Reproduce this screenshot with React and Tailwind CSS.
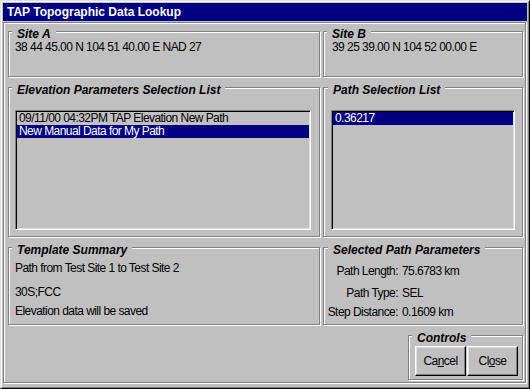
import React from "react";

function Group({ label, className, labelClass, children }) {
  return (
    <div
      className={`relative border border-[#808080] shadow-[inset_1px_1px_0_#ffffff,1px_1px_0_#ffffff] ${className}`}
    >
      <span
        className={`absolute top-[-5px] bg-[#c0c0c0] px-[5px] text-[12px] leading-[14px] font-bold italic tracking-normal whitespace-nowrap ${labelClass}`}
      >
        {label}
      </span>
      {children}
    </div>
  );
}

function ListBox({ className, items, selected }) {
  return (
    <div
      className={`border border-t-[#808080] border-l-[#808080] border-r-white border-b-white shadow-[inset_1px_1px_0_#000000,inset_-1px_-1px_0_#dfdfdf] p-[1px] ${className}`}
    >
      {items.map((it, i) => (
        <div
          key={i}
          className={`h-[13px] leading-[13px] text-[12px] pl-[2px] whitespace-nowrap ${
            i === selected ? "bg-[#000080] text-white" : "text-black"
          }`}
        >
          {it}
        </div>
      ))}
    </div>
  );
}

function Button({ children }) {
  return (
    <div className="w-[51px] h-[30px] border border-t-white border-l-white border-r-black border-b-black shadow-[inset_-1px_-1px_0_#808080,inset_1px_1px_0_#dfdfdf] flex items-center justify-center text-[12px] leading-[14px] text-black">
      {children}
    </div>
  );
}

export default function App() {
  return (
    <div className="w-[530px] h-[389px] bg-[#c0c0c0] font-['Liberation_Sans',Arial,sans-serif] tracking-[-0.55px] text-black">
      <div className="w-full h-full border border-t-[#dfdfdf] border-l-[#dfdfdf] border-r-black border-b-black">
        <div className="w-full h-full border border-t-white border-l-white border-r-[#808080] border-b-[#808080] p-[1px] flex flex-col">
          {/* Title bar */}
          <div className="h-[18px] bg-[#000080] pl-[4px] flex items-center">
            <span className="text-white font-bold text-[12px] leading-[18px] tracking-normal">
              TAP Topographic Data Lookup
            </span>
          </div>
          {/* Panel */}
          <div className="mt-[1px] w-[523px] h-[361px] border border-[#808080] shadow-[inset_1px_1px_0_#ffffff,1px_1px_0_#ffffff] pl-[4px] pt-[8px] flex flex-col">
            {/* Row 1 */}
            <div className="flex gap-[3px]">
              <Group label="Site A" className="w-[312px] h-[46px] pl-[6px] pt-[8px]" labelClass="left-[3px]">
                <div className="text-[12px] leading-[14px]">38 44 45.00 N 104 51 40.00 E NAD 27</div>
              </Group>
              <Group label="Site B" className="w-[200px] h-[46px] pl-[8px] pt-[8px]" labelClass="left-[3px]">
                <div className="text-[12px] leading-[14px]">39 25 39.00 N 104 52 00.00 E</div>
              </Group>
            </div>
            {/* Row 2 */}
            <div className="flex gap-[3px] mt-[10px]">
              <Group
                label="Elevation Parameters Selection List"
                className="w-[312px] h-[150px] pl-[6px] pt-[22px]"
                labelClass="left-[3px]"
              >
                <ListBox
                  className="w-[296px] h-[120px]"
                  items={["09/11/00 04:32PM TAP Elevation New Path", "New Manual Data for My Path"]}
                  selected={1}
                />
              </Group>
              <Group
                label="Path Selection List"
                className="w-[200px] h-[150px] pl-[7px] pt-[22px]"
                labelClass="left-[4px]"
              >
                <ListBox className="w-[184px] h-[120px]" items={["0.36217"]} selected={0} />
              </Group>
            </div>
            {/* Row 3 */}
            <div className="flex gap-[3px] mt-[10px]">
              <Group label="Template Summary" className="w-[312px] h-[78px] pl-[6px] pt-[13px]" labelClass="left-[3px]">
                <div className="text-[12px] leading-[14px]">Path from Test Site 1 to Test Site 2</div>
                <div className="text-[12px] leading-[14px] mt-[10px]">30S;FCC</div>
                <div className="text-[12px] leading-[14px] mt-[5px]">Elevation data will be saved</div>
              </Group>
              <Group
                label="Selected Path Parameters"
                className="w-[200px] h-[78px] pt-[16px]"
                labelClass="left-[4px]"
              >
                <div className="grid grid-cols-[74px_1fr] gap-x-[4px] text-[12px] leading-[14px] whitespace-nowrap">
                  <div className="text-right">Path Length:</div>
                  <div>75.6783 km</div>
                  <div className="text-right mt-[8px]">Path Type:</div>
                  <div className="mt-[8px]">SEL</div>
                  <div className="text-right mt-[5px]">Step Distance:</div>
                  <div className="mt-[5px]">0.1609 km</div>
                </div>
              </Group>
            </div>
            {/* Row 4 */}
            <div className="flex justify-end w-[515px] mt-[10px]">
              <Group label="Controls" className="w-[115px] h-[45px] pl-[6px] pt-[10px]" labelClass="left-[3px]">
                <div className="flex gap-[1px]">
                  <Button>
                    Ca<span className="underline">n</span>cel
                  </Button>
                  <Button>
                    Cl<span className="underline">o</span>se
                  </Button>
                </div>
              </Group>
            </div>
          </div>
        </div>
      </div>
    </div>
  );
}
